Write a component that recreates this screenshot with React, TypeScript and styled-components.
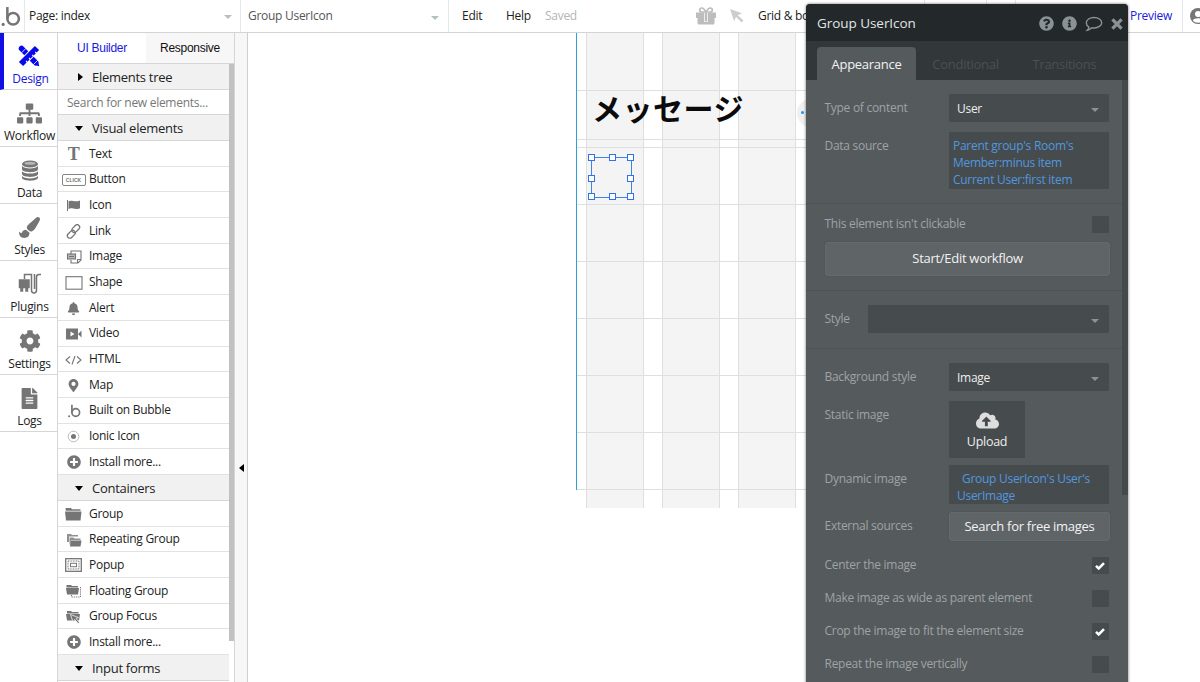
import React from "react";
import styled, { createGlobalStyle, css } from "styled-components";
import {
  FaSitemap, FaPaintBrush, FaCog, FaFileAlt, FaBell, FaMapMarkerAlt,
  FaPlusCircle, FaQuestionCircle, FaInfoCircle, FaCloudUploadAlt,
} from "react-icons/fa";

const Global = createGlobalStyle`
  * { box-sizing: border-box; }
  body { margin: 0; background: #fff; overflow: hidden; }
  #root { height: 100vh; }
`;

const Page = styled.div`
  position: relative;
  display: flex;
  flex-direction: column;
  width: 1200px;
  height: 682px;
  overflow: hidden;
  font: 12px/16px "Open Sans", "Noto Sans", sans-serif;
  letter-spacing: -0.28px;
  color: #222;
  svg { display: block; flex: none; }
`;

/* ---------- top bar ---------- */
const TopBar = styled.header`
  display: flex;
  flex: none;
  height: 33px;
  border-bottom: 1px solid #d4d4d4;
  background: #fff;
  white-space: nowrap;
`;
const BarCell = styled.div<{ $w: number; $pl?: number; $line?: boolean; $color?: string }>`
  display: flex;
  align-items: center;
  flex: none;
  width: ${p => p.$w}px;
  padding-left: ${p => p.$pl ?? 0}px;
  border-right: ${p => (p.$line ? "1px solid #e3e8ea" : "0")};
  color: ${p => p.$color ?? "#222"};
`;
const Caret = styled.i<{ $color: string; $right: number; $top?: number }>`
  margin: ${p => p.$top ?? 2}px ${p => p.$right}px 0 auto;
  border: 4px solid transparent;
  border-top-color: ${p => p.$color};
  border-bottom: 0;
`;

/* ---------- work area ---------- */
const Body = styled.div`
  display: flex;
  flex: 1;
  min-height: 0;
`;
const Nav = styled.nav`
  width: 58px;
  flex: none;
  border-right: 1px solid #d6d6d6;
`;
const NavItem = styled.div<{ $active?: boolean }>`
  display: flex;
  flex-direction: column;
  align-items: center;
  justify-content: space-between;
  height: 57px;
  padding: 10px 0 2px ${p => (p.$active ? 0 : 2)}px;
  border-left: ${p => (p.$active ? "4px solid #0f0fe6" : "0")};
  border-bottom: 1px solid #d6d6d6;
  color: ${p => (p.$active ? "#1616dd" : "#222")};
  svg { color: ${p => (p.$active ? "#0808e8" : "#757575")}; }
`;
const NavIcon = styled.div<{ $active?: boolean }>`
  display: flex;
  align-items: center;
  justify-content: center;
  height: 26px;
  padding-right: ${p => (p.$active ? 3 : 0)}px;
`;
const Palette = styled.aside`
  width: 177px;
  flex: none;
  border-right: 1px solid #d6d6d6;
  overflow: hidden;
`;
const Tabs = styled.div`
  display: flex;
  height: 31px;
  border-bottom: 1px solid #d6d6d6;
  font: 12px/30px "Liberation Sans", Arial, sans-serif;
`;
const Tab = styled.div<{ $active?: boolean }>`
  width: 88px;
  text-align: center;
  color: ${p => (p.$active ? "#1a1ae0" : "#111")};
  background: ${p => (p.$active ? "#fff" : "#f7f7f7")};
`;
const PaletteScroll = styled.div`
  display: flex;
`;
const PaletteList = styled.div`
  width: 171px;
`;
const Thumb = styled.div`
  width: 5px;
  height: 577px;
  background: #c1c1c1;
`;
const Section = styled.div<{ $closed?: boolean }>`
  display: flex;
  align-items: center;
  height: 26px;
  padding: ${p => (p.$closed ? 0 : 1)}px 0 0 34px;
  border-bottom: 1px solid #d6d6d6;
  background: #f1f1f1;
  font-size: 13px;
  position: relative;
  &::before {
    content: "";
    position: absolute;
    left: ${p => (p.$closed ? 20 : 17)}px;
    top: ${p => (p.$closed ? 9 : 11)}px;
    border: 4px solid transparent;
    ${p => p.$closed
      ? css`border-left: 5px solid #000; border-right: 0;`
      : css`border-top: 5px solid #000; border-bottom: 0;`}
  }
`;
const SearchRow = styled.div`
  height: 25px;
  padding: 5px 0 0 9px;
  border-bottom: 1px solid #d6d6d6;
  color: #777;
`;
const Row = styled.div`
  display: flex;
  align-items: center;
  height: 25.7px;
  padding-top: 0.5px;
  border-bottom: 1px solid #e2e2e2;
`;
const RowIcon = styled.div`
  display: flex;
  justify-content: center;
  align-items: center;
  width: 31px;
  padding-top: 1px;
  color: #757575;
`;
const SerifT = styled.b`
  font: bold 18px/18px "Liberation Serif", serif;
`;
const ClickBox = styled.span`
  width: 24px;
  height: 12px;
  border: 1px solid #858585;
  border-radius: 2px;
  font: bold 5px/10px "Liberation Sans", sans-serif;
  letter-spacing: 0;
  text-align: center;
`;
const Gutter = styled.div`
  display: flex;
  align-items: center;
  width: 13px;
  flex: none;
  padding: 221px 0 0 4px;
  border-right: 1px solid #cfcfcf;
  background: #f7f7f7;
  &::before {
    content: "";
    border: 4px solid transparent;
    border-right: 5px solid #000;
    border-left: 0;
  }
`;

/* ---------- design canvas ---------- */
const Canvas = styled.main`
  position: relative;
  flex: 1;
  padding-left: 328px;
`;
const PageFrame = styled.div`
  position: relative;
  width: 520px;
  height: 457px;
  border-left: 1px solid #2ba3d8;
`;
const GridColumns = styled.div`
  display: flex;
  gap: 18px;
  height: 475px;
  padding-left: 9px;
`;
const GridColumn = styled.div`
  width: 58px;
  flex: none;
  background: #f4f4f4;
  border: solid #dfdfdf;
  border-width: 0 1px;
`;
const Rule = styled.div<{ $y: number }>`
  position: absolute;
  left: 0;
  right: 0;
  top: ${p => p.$y}px;
  height: 1px;
  background: #dfdfdf;
`;
const Heading = styled.h1`
  position: absolute;
  left: 15px;
  top: 52px;
  margin: 0;
  font: bold 30px/44px "Noto Sans CJK JP", sans-serif;
  letter-spacing: 0.5px;
  color: #0b0b0b;
  white-space: nowrap;
`;
const RoundButton = styled.div`
  position: absolute;
  left: 220px;
  top: 66px;
  width: 28px;
  height: 28px;
  border-radius: 50%;
  background: #f0f0f0;
  &::before {
    content: "";
    position: absolute;
    left: 4px;
    top: 12px;
    width: 3px;
    height: 3px;
    border-radius: 50%;
    background: #2196f3;
  }
`;
const Selection = styled.div`
  position: absolute;
  left: 14px;
  top: 124px;
  width: 41px;
  height: 41px;
  border: 1px solid #3d86e0;
`;
const Handle = styled.i<{ $x: number; $y: number }>`
  position: absolute;
  left: ${p => p.$x - 4}px;
  top: ${p => p.$y - 4}px;
  width: 7px;
  height: 7px;
  border: 1px solid #2f73ea;
  background: #fff;
`;

/* ---------- property editor ---------- */
const Panel = styled.section`
  position: absolute;
  left: 806px;
  top: 4px;
  width: 322px;
  height: 690px;
  border-radius: 4px 4px 0 0;
  overflow: hidden;
  background: #555a5d;
  color: #eee;
`;
const PanelShadow = styled.div`
  position: absolute;
  left: 806px;
  top: 4px;
  width: 322px;
  height: 690px;
  border-radius: 4px;
  box-shadow: 0 0 3px rgba(0, 0, 0, 0.6);
`;
const PanelHead = styled.div`
  display: flex;
  align-items: center;
  gap: 8px;
  height: 37px;
  padding: 0 5px 0 11px;
  background: #23282b;
  font-size: 13.5px;
  letter-spacing: -0.05px;
  color: #e2e4e5;
  svg { color: #8b9296; margin-top: 2px; }
`;
const PanelTitle = styled.div`
  flex: 1;
`;
const PanelTabs = styled.div`
  display: flex;
  height: 39px;
  padding: 6px 0 0 11px;
  background: #32373a;
`;
const PanelTab = styled.div<{ $active?: boolean }>`
  width: 99px;
  border-radius: 4px 4px 0 0;
  font-size: 13px;
  line-height: 34px;
  text-align: center;
  background: ${p => (p.$active ? "#555a5d" : "none")};
  color: ${p => (p.$active ? "#f2f2f2" : "#4b5053")};
`;
const PanelBody = styled.div`
  display: flex;
`;
const PanelForm = styled.div`
  width: 316px;
`;
const PanelThumb = styled.div`
  width: 6px;
  height: 415px;
  background: #44494c;
`;
const Group = styled.div<{ $h: number; $pt: number }>`
  height: ${p => p.$h}px;
  padding: ${p => p.$pt}px 12px 0 19px;
  border-bottom: 1px solid #4d5255;
`;
const Field = styled.div<{ $h: number; $gap?: number }>`
  display: flex;
  justify-content: space-between;
  height: ${p => p.$h}px;
  margin-bottom: ${p => p.$gap ?? 0}px;
`;
const Label = styled.label<{ $t?: number }>`
  padding-top: ${p => p.$t ?? 6}px;
  margin-left: -0.5px;
  color: #9fa3a5;
  white-space: nowrap;
`;
const Box = styled.div<{ $w?: number }>`
  display: flex;
  align-items: center;
  width: ${p => p.$w ?? 160}px;
  margin-right: 1px;
  padding: 1px 0 0 8px;
  background: #464b4e;
  border-radius: 1px;
`;
const Expression = styled.div<{ $pl: number; $pt: number; $indent?: number }>`
  width: 160px;
  margin-right: 1px;
  padding: ${p => p.$pt}px 0 0 ${p => p.$pl}px;
  text-indent: ${p => p.$indent ?? 0}px;
  background: #464b4e;
  line-height: 17px;
  color: #5297de;
  white-space: pre-line;
  overflow: hidden;
`;
const Button = styled.div<{ $w: number; $h: number }>`
  width: ${p => p.$w}px;
  height: ${p => p.$h}px;
  border: 1px solid #65696c;
  border-radius: 2px;
  background: #5f6467;
  box-shadow: 0 0 1px rgba(0, 0, 0, 0.3);
  font-size: 13px;
  line-height: ${p => p.$h - 3}px;
  text-align: center;
  color: #f2f2f2;
`;
const Upload = styled.div`
  display: flex;
  flex-direction: column;
  align-items: center;
  width: 76px;
  height: 57px;
  margin-right: 85px;
  padding-top: 8px;
  background: #464b4e;
  font-size: 12.5px;
  svg { color: #ddd; margin-bottom: 2px; }
`;
const Check = styled.div`
  display: flex;
  align-items: center;
  justify-content: center;
  width: 17px;
  height: 17px;
  margin-right: 1px;
  padding-right: 1px;
  border-radius: 1px;
  background: #464b4e;
`;

/* ---------- drawings ---------- */
const BLogo = ({ size = 20, color = "#757575" }) => (
  <svg width={size} height={size} viewBox="0 0 20 20" fill="none" stroke={color} strokeWidth="2.4">
    <circle cx="12.500" cy="12.200" r="5.500" />
    <path d="M7 1v11.500" />
    <circle cx="3" cy="17.500" r="1.500" fill={color} stroke="none" />
  </svg>
);
const DesignIcon = () => (
  <svg width="22" height="22" viewBox="0 0 22 22" fill="none" stroke="currentColor">
    <path d="M3.500 3.500L17.500 17.500" strokeWidth="5.500" strokeLinecap="round" />
    <path d="M19.800 15L21.300 21.300L15 19.800Z" fill="currentColor" stroke="none" />
    <path d="M3.500 7.800L7.800 3.500M14.800 20.200L20.200 14.800" stroke="#fff" strokeWidth=".8" />
    <path d="M18.500 3.500L3.500 18.500" stroke="#fff" strokeWidth="7.600" />
    <path d="M19 3L3 19" strokeWidth="6" />
    <path d="M17.200 6.800l1.300 1.300M14.200 9.800l1.300 1.300M11 13l1.300 1.300M8 16l1.300 1.300" stroke="#fff" strokeWidth="1.100" />
  </svg>
);
const DatabaseIcon = () => (
  <svg width="18" height="21" viewBox="0 0 18 21" fill="currentColor">
    <ellipse cx="9" cy="4" rx="8" ry="3.600" />
    <ellipse cx="9" cy="3.300" rx="5.500" ry="1.500" fill="#b5b5b5" />
    <path d="M1 6v3c0 4.200 16 4.200 16 0V6c-2 3.200-14 3.200-16 0z" />
    <path d="M1 11.200v2.600c0 4.200 16 4.200 16 0v-2.600c-2 3.200-14 3.200-16 0z" />
    <path d="M1 16v1.600c0 4.200 16 4.200 16 0V16c-2 3.200-14 3.200-16 0z" />
  </svg>
);
const PluginsIcon = () => (
  <svg width="24" height="22" viewBox="0 0 24 22" fill="none" stroke="currentColor" strokeWidth="1.5">
    <path d="M1.500 7h9.500v7.500h-9.500zM3 15h1.500v3H3zM8 15h1.500v3H8z" fill="currentColor" />
    <path d="M6.500 6V1.500h7V17q0 3 2.500 3t2.500-3V4q0-2.500 2.500-2.500h2M16.500 1v15" />
  </svg>
);
const GiftIcon = () => (
  <svg width="20" height="18" viewBox="0 0 20 18" fill="#bdbdbd">
    <path d="M0 5.500h8V11H0zM12 5.500h8V11h-8zM1.500 11H8v6.500H3q-1.500 0-1.500-1.500zM12 11h6.500v5q0 1.500-1.500 1.500h-5zM8 15h4v2.500H8zM8.700 5.500h2.600v9H8.700z" />
    <path d="M10 5C8 1.500 7 1 5.800 1 3 1 3 5 5.800 5zM10 5c2-3.500 3-4 4.200-4C17 1 17 5 14.200 5z" fill="none" stroke="#bdbdbd" strokeWidth="1.700" />
  </svg>
);
const LinkIcon = () => (
  <svg width="15" height="15" viewBox="0 0 15 15" fill="none" stroke="currentColor" strokeWidth="1.3">
    <rect x="5.200" y="2.200" width="9" height="5" rx="2.500" transform="rotate(-45 9.700 4.700)" />
    <rect x=".8" y="7.800" width="9" height="5" rx="2.500" transform="rotate(-45 5.300 10.300)" />
  </svg>
);
const FlagIcon = () => (
  <svg width="15" height="13" viewBox="0 0 15 13" fill="currentColor">
    <path d="M1 1h1v11H1zM2.500 2.300c3-2 6 1.500 11.500-.8v7.700c-5.500 2.300-8-1.200-11.500.8z" />
  </svg>
);
const ImageIcon = () => (
  <svg width="16" height="14" viewBox="0 0 16 14" fill="none" stroke="currentColor" strokeWidth="1.100">
    <path d="M5 4V1h10v9l-3 3H5v-3M15 9.500h-3.500V13" />
    <rect x="1.500" y="4" width="8" height="5" fill="#b9b9b9" /><path d="M3 6.500h5" />
  </svg>
);
const ShapeIcon = () => (
  <svg width="18" height="14" viewBox="0 0 18 14"><rect x="1" y=".7" width="16" height="12.500" fill="none" stroke="currentColor" strokeWidth="1.100" /></svg>
);
const VideoIcon = () => (
  <svg width="16" height="12" viewBox="0 0 16 12" fill="currentColor">
    <path fillRule="evenodd" d="M0 .5h12v11H0zM4.500 3.500v5L8.500 6zM12 6l3.500-3.500v7z" />
  </svg>
);
const HtmlIcon = () => (
  <svg width="17" height="10" viewBox="0 0 17 10" fill="none" stroke="currentColor" strokeWidth="1.100">
    <path d="M5 1.500L1 5l4 3.500M12 1.500L16 5l-4 3.500M10 1L7 9.500" />
  </svg>
);
const IonicIcon = () => (
  <svg width="13" height="13" viewBox="0 0 13 13"><circle cx="6.500" cy="6.500" r="5.300" fill="none" stroke="#aaa" strokeWidth=".8" /><circle cx="6.500" cy="6.500" r="2.500" fill="currentColor" /></svg>
);
const FolderIcon = () => (
  <svg width="17" height="14" viewBox="0 0 17 14" fill="currentColor">
    <path d="M.5 1h5.500l1 1.300h8.500v1.500H.8z" /><path d="M0 4.500h16.500L15.500 13.500H1z" />
  </svg>
);
const RepeatingIcon = () => (
  <svg width="16" height="14" viewBox="0 0 16 14" fill="currentColor">
    <path d="M1 9V1h4l1 1h6v1.500H3V9z" opacity=".8" />
    <path d="M3.500 12V4.500h4l1 1h6V7H5z" opacity=".8" /><path d="M4.500 7.500H15.500l-1 6H4z" />
  </svg>
);
const PopupIcon = () => (
  <svg width="17" height="14" viewBox="0 0 17 14" fill="none" stroke="currentColor">
    <rect x=".7" y=".7" width="15.600" height="12.600" strokeWidth="1.300" />
    <rect x="3" y="3" width="11" height="8" strokeDasharray="1 .6" />
    <rect x="5.500" y="5.300" width="6" height="3.400" />
  </svg>
);
const FloatingIcon = () => (
  <svg width="16" height="14" viewBox="0 0 16 14" fill="currentColor">
    <path d="M.5 1h4.500l1 1h6v1.500H.5z" /><path d="M0 4h13l-1 6.500H1z" />
    <path d="M14.500 3v10h-9v-3" fill="none" stroke="currentColor" strokeDasharray="1.200 1" />
  </svg>
);
const FocusIcon = () => (
  <svg width="15" height="14" viewBox="0 0 15 14" fill="currentColor">
    <path d="M1 1h4l1 1h6.500v1.500H1zM0 4h14l-1 6.500H1z" />
    <path d="M4.500 4.500l8 3-2.500 1 3.500 4-1.300 1-3.600-4L7 12z" stroke="#fff" strokeWidth=".7" />
  </svg>
);
const ArrowIcon = () => (
  <svg width="14" height="14" viewBox="0 0 14 14" fill="#cdcdcd"><path d="M0 0l12 4.300-4.300 2 5.800 5.300-2 2-5.500-5.800-1.800 4.500z" /></svg>
);
const BubbleIcon = () => (
  <svg width="18" height="16" viewBox="0 0 18 16" fill="none" stroke="currentColor" strokeWidth="1.400">
    <path d="M9 1.500c4.300 0 7.700 2.300 7.700 5.200S13.300 12 9 12c-.8 0-1.500 0-2.200-.2C5.500 13 4 13.900 2.300 14.200c.9-.9 1.500-2 1.600-3.200C2.300 10 1.300 8.500 1.300 6.700 1.300 3.800 4.700 1.500 9 1.500z" />
  </svg>
);
const CloseIcon = () => (
  <svg width="12" height="12" viewBox="0 0 12 12" stroke="currentColor" strokeWidth="3.300"><path d="M1.400 1.400l9.200 9.200M10.600 1.400l-9.200 9.200" /></svg>
);
const Tick = () => (
  <svg width="10" height="8" viewBox="0 0 10 8" fill="none" stroke="#fff" strokeWidth="2.500"><path d="M1 3.800l2.700 2.700L9 1.200" /></svg>
);
const AvatarIcon = () => (
  <svg width="16" height="16" viewBox="0 0 16 16">
    <circle cx="8" cy="8" r="8" fill="#757575" /><circle cx="8" cy="6" r="3" fill="#fff" />
    <path d="M2.800 12.500c1-3 9.400-3 10.400 0-2.500 3-8 3-10.400 0z" fill="#fff" />
  </svg>
);

const navItems: [string, React.ReactNode][] = [
  ["Design", <DesignIcon />],
  ["Workflow", <FaSitemap size={25} />],
  ["Data", <DatabaseIcon />],
  ["Styles", <FaPaintBrush size={21} />],
  ["Plugins", <PluginsIcon />],
  ["Settings", <FaCog size={22} />],
  ["Logs", <FaFileAlt size={21} />],
];
const visual: [string, React.ReactNode][] = [
  ["Text", <SerifT>T</SerifT>],
  ["Button", <ClickBox>CLICK</ClickBox>],
  ["Icon", <FlagIcon />],
  ["Link", <LinkIcon />],
  ["Image", <ImageIcon />],
  ["Shape", <ShapeIcon />],
  ["Alert", <FaBell size={13} />],
  ["Video", <VideoIcon />],
  ["HTML", <HtmlIcon />],
  ["Map", <FaMapMarkerAlt size={13} />],
  ["Built on Bubble", <BLogo size={14} />],
  ["Ionic Icon", <IonicIcon />],
  ["Install more...", <FaPlusCircle size={14} />],
];
const containers: [string, React.ReactNode][] = [
  ["Group", <FolderIcon />],
  ["Repeating Group", <RepeatingIcon />],
  ["Popup", <PopupIcon />],
  ["Floating Group", <FloatingIcon />],
  ["Group Focus", <FocusIcon />],
  ["Install more...", <FaPlusCircle size={14} />],
];
const options: [string, boolean][] = [
  ["Center the image", true],
  ["Make image as wide as parent element", false],
  ["Crop the image to fit the element size", true],
  ["Repeat the image vertically", false],
];
const rules = [57, 106, 114, 171, 228, 285, 342, 399, 456];
const handles = [[0, 0], [21, 0], [39, 0], [0, 21], [39, 21], [0, 39], [21, 39], [39, 39]];

const Rows = ({ items }: { items: [string, React.ReactNode][] }) => (
  <>{items.map(([name, icon]) => <Row key={name}><RowIcon>{icon}</RowIcon>{name}</Row>)}</>
);

export default function App() {
  return (
    <Page>
      <Global />
      <TopBar>
        <BarCell $w={25} $line><BLogo size={21} /></BarCell>
        <BarCell $w={216} $pl={4} $line>Page: index<Caret $color="#b4bfc5" $right={8} /></BarCell>
        <BarCell $w={208} $pl={7} $line $color="#555">Group UserIcon<Caret $color="#b4bfc5" $right={9} $top={4} /></BarCell>
        <BarCell $w={57} $pl={13}>Edit</BarCell>
        <BarCell $w={39}>Help</BarCell>
        <BarCell $w={151} $color="#b5b5b5">Saved</BarCell>
        <BarCell $w={34}><GiftIcon /></BarCell>
        <BarCell $w={28}><ArrowIcon /></BarCell>
        <BarCell $w={48}>Grid &amp; bo</BarCell>
        <BarCell $w={119} $line />
        <BarCell $w={62} $line />
        <BarCell $w={29} $line />
        <BarCell $w={167} $pl={114} $line $color="#2020dd">Preview</BarCell>
        <BarCell $w={30} $pl={7}><AvatarIcon /></BarCell>
      </TopBar>
      <Body>
        <Nav>
          {navItems.map(([name, icon], i) => (
            <NavItem key={name} $active={i === 0}><NavIcon $active={i === 0}>{icon}</NavIcon>{name}</NavItem>
          ))}
        </Nav>
        <Palette>
          <Tabs><Tab $active>UI Builder</Tab><Tab>Responsive</Tab></Tabs>
          <PaletteScroll>
            <PaletteList>
              <Section $closed>Elements tree</Section>
              <SearchRow>Search for new elements...</SearchRow>
              <Section>Visual elements</Section>
              <Rows items={visual} />
              <Section>Containers</Section>
              <Rows items={containers} />
              <Section>Input forms</Section>
            </PaletteList>
            <Thumb />
          </PaletteScroll>
        </Palette>
        <Gutter />
        <Canvas>
          <PageFrame>
            <GridColumns>{[0, 1, 2, 3].map(c => <GridColumn key={c} />)}</GridColumns>
            {rules.map(y => <Rule key={y} $y={y} />)}
            <Heading>メッセージ</Heading>
            <RoundButton />
            <Selection>{handles.map(([x, y]) => <Handle key={`${x}-${y}`} $x={x} $y={y} />)}</Selection>
          </PageFrame>
        </Canvas>
      </Body>
      <PanelShadow />
      <Panel>
        <PanelHead>
          <PanelTitle>Group UserIcon</PanelTitle>
          <FaQuestionCircle size={15} /><FaInfoCircle size={15} /><BubbleIcon /><CloseIcon />
        </PanelHead>
        <PanelTabs>
          <PanelTab $active>Appearance</PanelTab><PanelTab>Conditional</PanelTab><PanelTab>Transitions</PanelTab>
        </PanelTabs>
        <PanelBody>
          <PanelForm>
            <Group $h={124} $pt={14}>
              <Field $h={28} $gap={10}><Label>Type of content</Label><Box>User<Caret $color="#8d9193" $right={10} /></Box></Field>
              <Field $h={57}><Label>Data source</Label>
                <Expression $pl={4} $pt={5}>{"Parent group's Room's\nMember:minus item\nCurrent User:first item"}</Expression>
              </Field>
            </Group>
            <Group $h={87} $pt={12}>
              <Field $h={17} $gap={9}><Label $t={-1}>This element isn't clickable</Label><Check /></Field>
              <Button $w={285} $h={34}>Start/Edit workflow</Button>
            </Group>
            <Group $h={58} $pt={14}>
              <Field $h={28}><Label>Style</Label><Box $w={241}><Caret $color="#8d9193" $right={10} /></Box></Field>
            </Group>
            <Group $h={345} $pt={14}>
              <Field $h={28} $gap={10}><Label>Background style</Label><Box>Image<Caret $color="#8d9193" $right={10} /></Box></Field>
              <Field $h={57} $gap={7}><Label>Static image</Label><Upload><FaCloudUploadAlt size={23} />Upload</Upload></Field>
              <Field $h={39} $gap={8}><Label>Dynamic image</Label>
                <Expression $pl={8} $pt={5} $indent={5}>{"Group UserIcon's User's\nUserImage"}</Expression>
              </Field>
              <Field $h={29} $gap={16}><Label>External sources</Label><Button $w={161} $h={29}>Search for free images</Button></Field>
              {options.map(([text, on]) => (
                <Field key={text} $h={17} $gap={16}><Label $t={0}>{text}</Label><Check>{on && <Tick />}</Check></Field>
              ))}
            </Group>
          </PanelForm>
          <PanelThumb />
        </PanelBody>
      </Panel>
    </Page>
  );
}
